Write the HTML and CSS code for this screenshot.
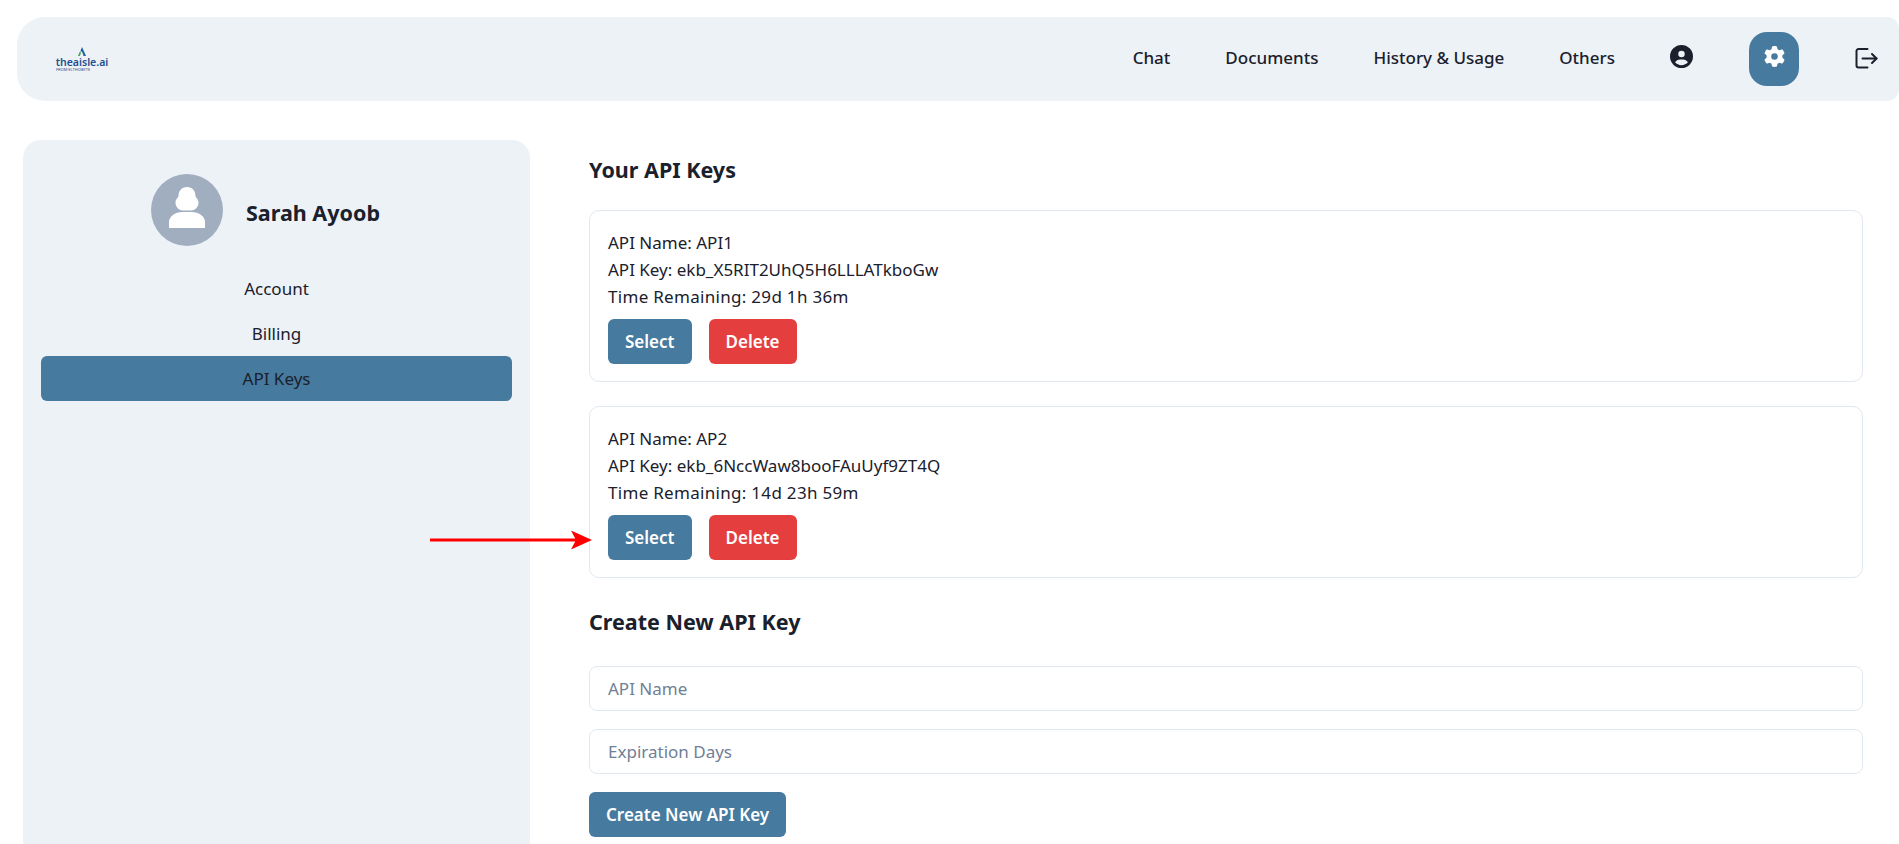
FILE: index.html
```html
<!DOCTYPE html>
<html lang="en">

<head>
    <meta charset="UTF-8">
    <meta name="viewport" content="width=device-width, initial-scale=1.0">
    <title>API Keys</title>
    <link rel="stylesheet" href="styles.css">
</head>

<body>
    <header class="navbar">
        <a class="logo" href="#">
            <svg class="logo-mark" viewBox="0 0 12 10" width="12" height="10">
                <path d="M6 0 L10 9 H7.6 L6 4.6 Z" fill="#1f5ea8" />
                <path d="M6 0 L4.4 4.6 L6 4.6 Z" fill="#174a8c" />
                <path d="M3.6 5 L5.2 5.6 L3.8 9 H2 Z" fill="#3fa84a" />
            </svg>
            <span class="logo-name">theaisle.ai</span>
            <span class="logo-sub">FROM ELTHOBYTE</span>
        </a>
        <nav class="nav-links">
            <a class="nav-text" href="#">Chat</a>
            <a class="nav-text" href="#">Documents</a>
            <a class="nav-text" href="#">History &amp; Usage</a>
            <a class="nav-text" href="#">Others</a>
            <a class="nav-user" href="#">
                <svg viewBox="0 0 512 512" width="23" height="23">
                    <path fill="#1a202c" d="M399 384.2C376.9 345.8 335.4 320 288 320H224c-47.4 0-88.9 25.8-111 64.2c35.2 39.2 86.2 63.8 143 63.8s107.8-24.7 143-63.8zM0 256a256 256 0 1 1 512 0A256 256 0 1 1 0 256zm256 16a72 72 0 1 0 0-144 72 72 0 1 0 0 144z" />
                </svg>
            </a>
            <a class="nav-settings" href="#">
                <svg viewBox="0 0 512 512" width="21" height="21">
                    <path fill="#fff" d="M495.9 166.6c3.2 8.7 .5 18.4-6.4 24.6l-43.3 39.4c1.1 8.3 1.7 16.8 1.7 25.4s-.6 17.1-1.7 25.4l43.3 39.4c6.9 6.2 9.6 15.9 6.4 24.6c-4.4 11.9-9.7 23.3-15.8 34.3l-4.7 8.1c-6.6 11-14 21.4-22.1 31.2c-5.9 7.2-15.7 9.6-24.5 6.8l-55.7-17.7c-13.4 10.3-28.2 18.9-44 25.4l-12.5 57.1c-2 9.1-9 16.3-18.2 17.8c-13.8 2.3-28 3.5-42.5 3.5s-28.7-1.2-42.5-3.5c-9.2-1.5-16.2-8.7-18.2-17.8l-12.5-57.1c-15.8-6.5-30.6-15.1-44-25.4L83.1 425.9c-8.8 2.8-18.6 .3-24.5-6.8c-8.1-9.8-15.5-20.2-22.1-31.2l-4.7-8.1c-6.1-11-11.4-22.4-15.8-34.3c-3.2-8.7-.5-18.4 6.4-24.6l43.3-39.4C64.6 273.1 64 264.6 64 256s.6-17.1 1.7-25.4L22.4 191.2c-6.9-6.2-9.6-15.9-6.4-24.6c4.4-11.9 9.7-23.3 15.8-34.3l4.7-8.1c6.6-11 14-21.4 22.1-31.2c5.9-7.2 15.7-9.6 24.5-6.8l55.7 17.7c13.4-10.3 28.2-18.9 44-25.4l12.5-57.1c2-9.1 9-16.3 18.2-17.8C227.3 1.2 241.5 0 256 0s28.7 1.2 42.5 3.5c9.2 1.5 16.2 8.7 18.2 17.8l12.5 57.1c15.8 6.5 30.6 15.1 44 25.4l55.7-17.7c8.8-2.8 18.6-.3 24.5 6.8c8.1 9.8 15.5 20.2 22.1 31.2l4.7 8.1c6.1 11 11.4 22.4 15.8 34.3zM256 336a80 80 0 1 0 0-160 80 80 0 1 0 0 160z" />
                </svg>
            </a>
            <a class="nav-logout" href="#">
                <svg viewBox="0 0 24 22" width="24" height="22" fill="none" stroke="#1a202c" stroke-width="2" stroke-linecap="round" stroke-linejoin="round">
                    <path d="M13.500 2H4.500a2 2 0 0 0-2 2v14.500a2 2 0 0 0 2 2h9" />
                    <path d="M18 7l4.500 4.500-4.500 4.500" />
                    <path d="M8.500 11.500h14" />
                </svg>
            </a>
        </nav>
    </header>

    <div class="page">
        <aside class="sidebar">
            <div class="profile">
                <div class="avatar">
                    <svg viewBox="0 0 72 72" width="72" height="72">
                        <path fill="#fff" d="M36 13c5.500 0 8.500 4 8.500 9 0 1.500 3 3 3 6.500 0 4.500-3.500 8-7.500 8h-8c-4 0-7.500-3.500-7.500-8 0-3.500 3-5 3-6.500 0-5 3-9 8.500-9z" />
                        <path fill="#fff" d="M18 54v-6c0-6 7-10 13-10h10c6 0 13 4 13 10v6z" />
                    </svg>
                </div>
                <span class="profile-name">Sarah Ayoob</span>
            </div>
            <ul class="side-menu">
                <li>Account</li>
                <li>Billing</li>
                <li class="active">API Keys</li>
            </ul>
        </aside>

        <main class="content">
            <h2>Your API Keys</h2>

            <div class="key-card">
                <p>API Name: API1</p>
                <p>API Key: ekb_X5RIT2UhQ5H6LLLATkboGw</p>
                <p class="key-time">Time Remaining: 29d 1h 36m</p>
                <div class="key-actions">
                    <button class="btn">Select</button>
                    <button class="btn btn-delete">Delete</button>
                </div>
            </div>

            <div class="key-card">
                <p>API Name: AP2</p>
                <p>API Key: ekb_6NccWaw8booFAuUyf9ZT4Q</p>
                <p class="key-time">Time Remaining: 14d 23h 59m</p>
                <div class="key-actions">
                    <button class="btn">Select</button>
                    <button class="btn btn-delete">Delete</button>
                </div>
            </div>

            <h2 class="create-title">Create New API Key</h2>
            <input class="field" type="text" placeholder="API Name">
            <input class="field" type="text" placeholder="Expiration Days">
            <button class="btn btn-create">Create New API Key</button>
        </main>
    </div>

    <!-- annotation drawn over the screenshot -->
    <svg class="arrow" viewBox="0 0 162 20" width="162" height="20">
        <path d="M0 10 H146" stroke="#f00" stroke-width="3" />
        <path d="M141 0.500 L162 10 L141 19.500 L146 10 Z" fill="#f00" />
    </svg>
</body>

</html>
```

FILE: styles.css
```css
* {
    box-sizing: border-box;
}

html,
body {
    height: 844px;
    overflow: hidden;
}

body {
    margin: 0;
    font-family: "Noto Sans", Arial, sans-serif;
    font-size: 17px;
    color: #1a202c;
    background: #fff;
}

a {
    color: inherit;
    text-decoration: none;
}

.navbar {
    display: flex;
    align-items: center;
    justify-content: space-between;
    height: 84px;
    margin: 17px 0 0 17px;
    padding: 0 21px 0 39px;
    background: #edf2f7;
    border-radius: 28px 12px 12px 28px;
}

.logo {
    display: flex;
    flex-direction: column;
    align-items: center;
    width: 52px;
    color: #1d4f91;
    margin-top: 2px;
}

.logo-mark {
    display: block;
}

.logo-name {
    font-size: 10.500px;
    line-height: 10px;
    font-weight: 600;
    white-space: nowrap;
}

.logo-sub {
    align-self: flex-start;
    font-size: 4px;
    line-height: 6px;
    white-space: nowrap;
}

.nav-links {
    display: flex;
    align-items: center;
    gap: 55px;
    font-weight: 500;
}

.nav-links a {
    display: flex;
}

.nav-text {
    margin-top: -3px;
}

.nav-user {
    margin: -5px 1px 0 0;
}

.nav-logout {
    margin-top: -2px;
}

.nav-settings {
    align-items: center;
    justify-content: center;
    width: 50px;
    height: 54px;
    padding-bottom: 5px;
    background: #467a9e;
    border-radius: 18px;
}

.page {
    display: flex;
    margin-top: 39px;
}

.sidebar {
    flex: none;
    width: 507px;
    height: 720px;
    margin-left: 23px;
    padding: 34px 18px;
    background: #edf2f7;
    border-radius: 18px;
}

.profile {
    display: flex;
    align-items: center;
    gap: 23px;
    margin-bottom: 20px;
    padding-left: 110px;
}

.avatar {
    display: flex;
    width: 72px;
    height: 72px;
    background: #a0aec0;
    border-radius: 50%;
}

.profile-name {
    margin-top: 5px;
    font-size: 21.500px;
    font-weight: 700;
}

.side-menu {
    margin: 0;
    padding: 0;
    list-style: none;
    text-align: center;
}

.side-menu li {
    height: 45px;
    line-height: 45px;
}

.side-menu .active {
    background: #467a9e;
    border-radius: 6px;
}

.content {
    width: 1274px;
    margin-left: 59px;
    padding-top: 16px;
}

h2 {
    margin: 0 0 26px;
    font-size: 21.500px;
    line-height: 28px;
    font-weight: 700;
}

.key-card {
    margin-bottom: 24px;
    padding: 18px 18px 17px;
    border: 1px solid #e2e8f0;
    border-radius: 10px;
}

.key-card p {
    margin: 0;
    line-height: 27px;
}

.key-card .key-time {
    letter-spacing: 0.300px;
}

.key-actions {
    display: flex;
    gap: 17px;
    margin-top: 9px;
}

.btn {
    height: 45px;
    padding: 0 17px;
    border: none;
    border-radius: 6px;
    background: #467a9e;
    color: #fff;
    font-family: inherit;
    font-size: 17px;
    font-weight: 600;
    cursor: pointer;
}

.btn-delete {
    background: #e53e3e;
}

.create-title {
    margin-top: 30px;
    margin-bottom: 30px;
}

.field {
    display: block;
    width: 100%;
    height: 45px;
    margin-bottom: 18px;
    padding: 0 18px;
    border: 1px solid #e2e8f0;
    border-radius: 8px;
    font-family: inherit;
    font-size: 17px;
    color: #1a202c;
}

.field::placeholder {
    color: #718096;
}

.arrow {
    position: absolute;
    left: 430px;
    top: 530px;
}
```
